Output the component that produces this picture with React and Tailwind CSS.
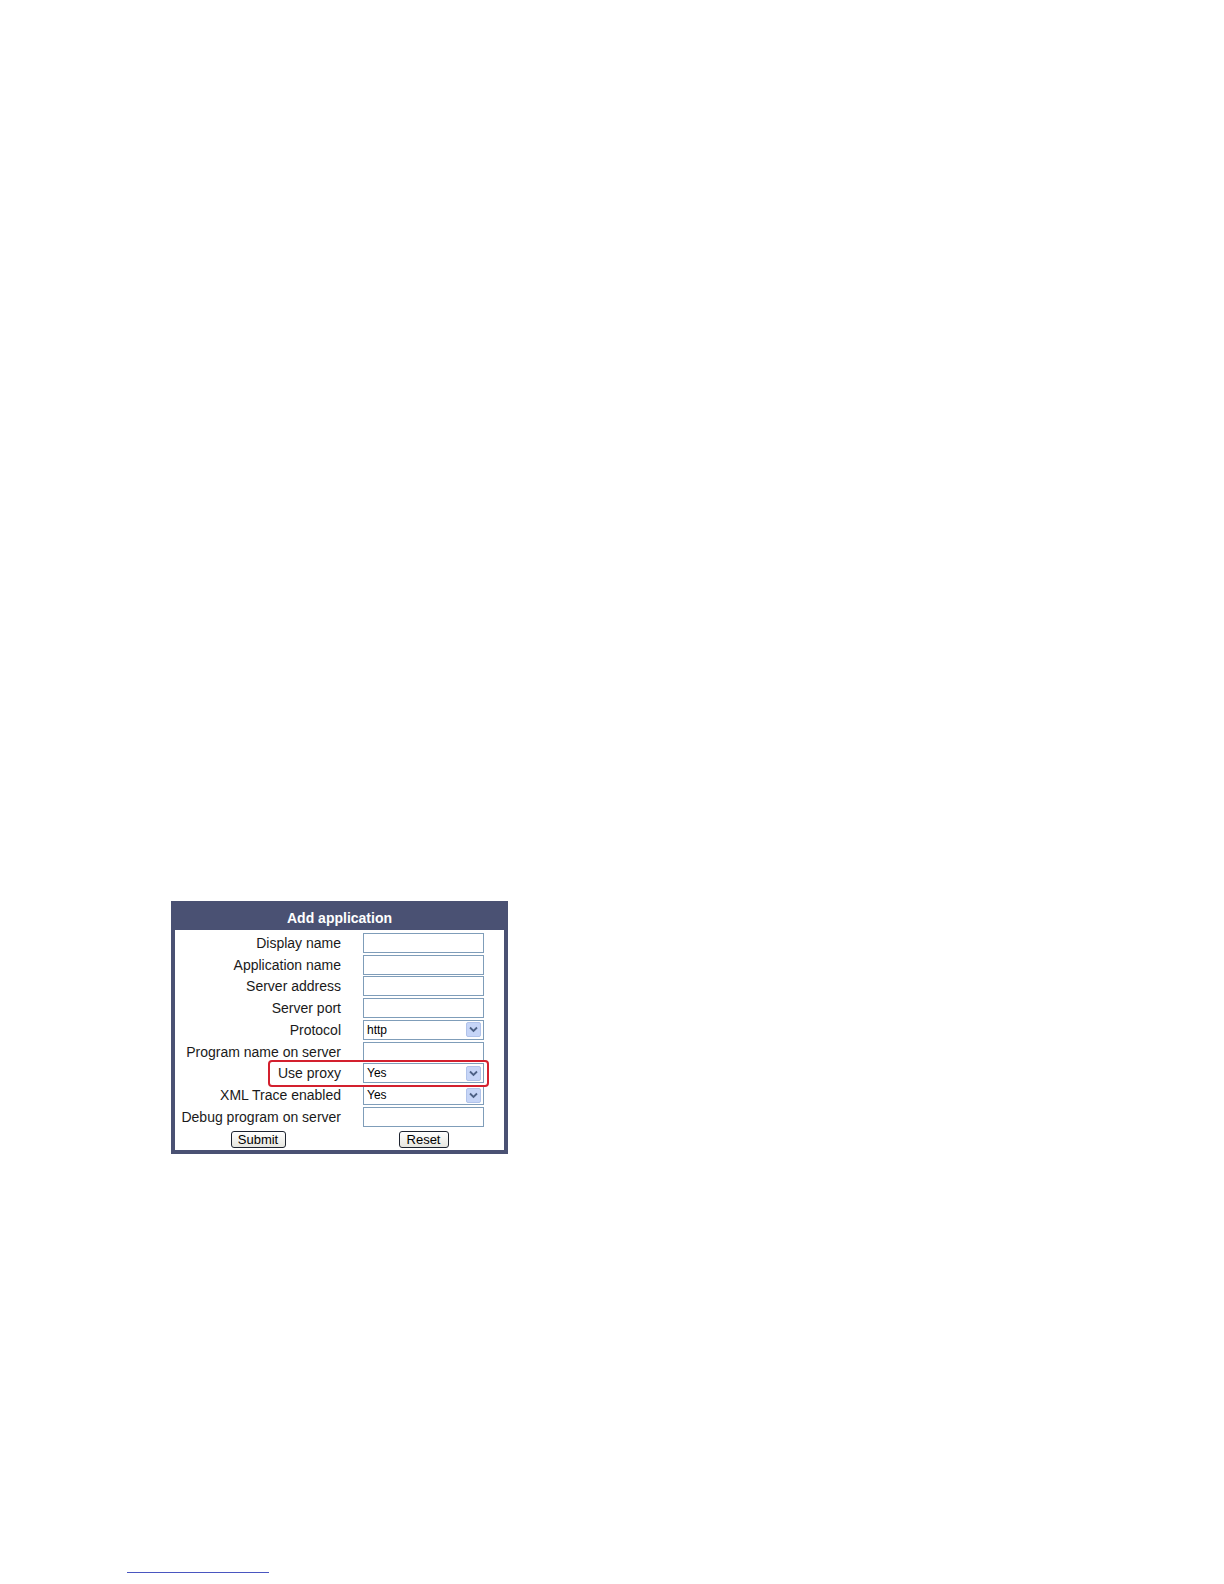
import React from 'react';

const rows = [
  { label: 'Display name', type: 'input' },
  { label: 'Application name', type: 'input' },
  { label: 'Server address', type: 'input' },
  { label: 'Server port', type: 'input' },
  { label: 'Protocol', type: 'select', value: 'http' },
  { label: 'Program name on server', type: 'input' },
  { label: 'Use proxy', type: 'select', value: 'Yes' },
  { label: 'XML Trace enabled', type: 'select', value: 'Yes' },
  { label: 'Debug program on server', type: 'input' },
];

const Arrow = () => (
  <div className="w-[15px] h-[15px] mr-[2px] bg-[#c6d5f7] border border-[#b1c3ea] rounded-[2px] flex items-center justify-center">
    <svg width="9" height="7" viewBox="0 0 9 7">
      <path d="M1 1.5 L4.5 5 L8 1.5" fill="none" stroke="#4d6185" strokeWidth="1.8" />
    </svg>
  </div>
);

const Field = ({ row }) =>
  row.type === 'select' ? (
    <div className="w-[121px] h-[20px] border border-[#7f9db9] bg-white flex items-center justify-between">
      <span className="pl-[3px] text-[12px] text-black">{row.value}</span>
      <Arrow />
    </div>
  ) : (
    <div className="w-[121px] h-[20px] border border-[#7f9db9] bg-white" />
  );

const Btn = ({ children, w }) => (
  <div
    className={`${w} h-[17px] border border-[#1e2430] rounded-[3px] bg-gradient-to-b from-white to-[#e6e6e0] flex items-center justify-center text-[13px] leading-none text-black`}
  >
    {children}
  </div>
);

export default function App() {
  return (
    <div
      className="relative w-[1224px] h-[1584px] bg-white overflow-hidden"
      style={{ fontFamily: '"Liberation Sans", Arial, sans-serif' }}
    >
      <div className="pt-[901px] pl-[171px]">
        <div className="relative w-[337px] bg-[#4a5173] px-[4px] pb-[4px]">
          <div className="h-[29px] flex items-end justify-center pb-[4px] text-white font-bold text-[14px] leading-[16px]">
            Add application
          </div>
          <div className="bg-white pt-[2px] pb-[2px]">
            {rows.map((r) => (
              <div key={r.label} className="flex items-center h-[21.75px]">
                <div className="w-[166px] text-right text-[14px] text-[#1a1a1a] leading-none">
                  {r.label}
                </div>
                <div className="ml-[22px]">
                  <Field row={r} />
                </div>
              </div>
            ))}
            <div className="flex items-end h-[20px]">
              <div className="w-[166px] flex justify-center">
                <Btn w="w-[55px]">Submit</Btn>
              </div>
              <div className="ml-[22px] w-[121px] flex justify-center">
                <Btn w="w-[50px]">Reset</Btn>
              </div>
            </div>
          </div>
          <div className="absolute left-[97px] top-[159px] w-[221px] h-[27px] border-2 border-[#d3202e] rounded-[4px]" />
        </div>
      </div>
      <div className="absolute left-[127px] top-[1572px] w-[142px] h-[1px] bg-[#4a56c0]" />
    </div>
  );
}
